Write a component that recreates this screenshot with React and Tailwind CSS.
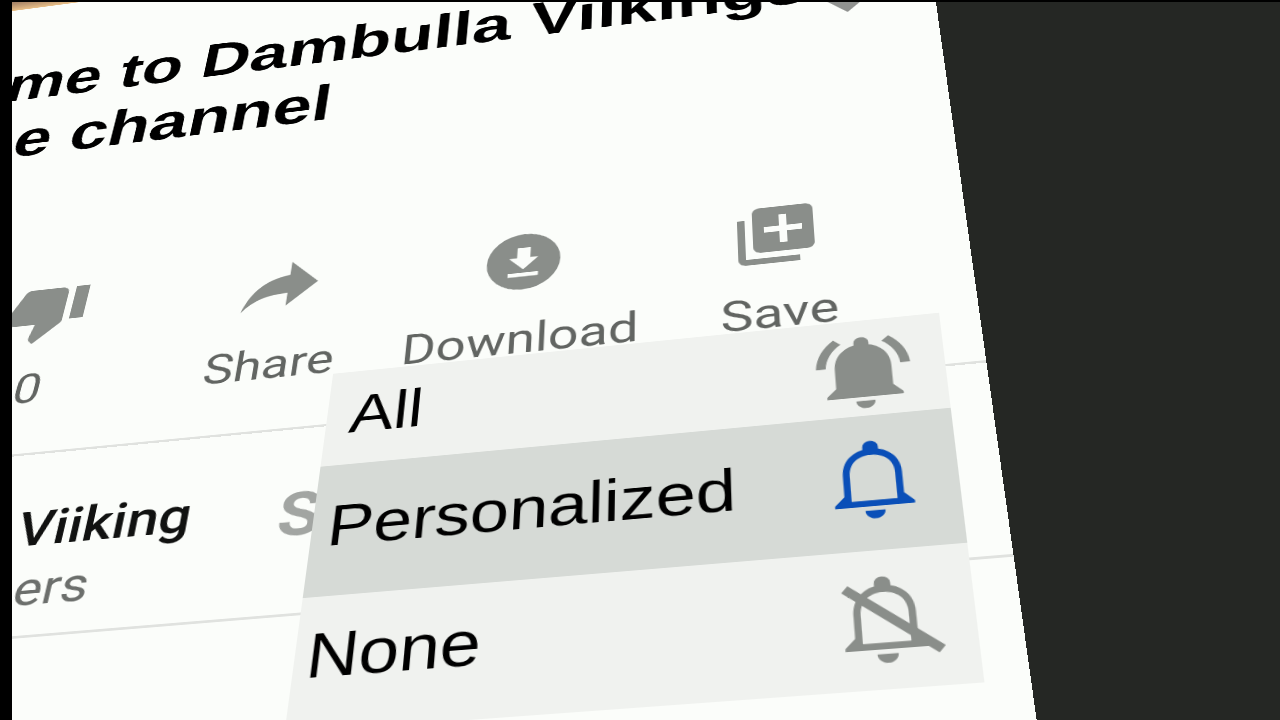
import React from "react";

const BELL =
  "M18 11c0-3.1-1.6-5.6-4.4-6.3V4.1a1.6 1.6 0 0 0-3.2 0v.6C7.6 5.4 6 7.9 6 11v5.2l-2 2.1v.7h16v-.7l-2-2.1z";
const BELL_HOLE = "M12 6.1c-3 0-4.6 2.2-4.6 4.9v6.5h9.2V11c0-2.7-1.6-4.9-4.6-4.9z";
const CLAPPER = "M10 20h4c0 1.2-.9 2-2 2s-2-.8-2-2z";

const DislikeIcon = () => (
  <svg viewBox="0 0 24 24" className="size-24 fill-current">
    <path d="M15 3H6c-.8 0-1.5.5-1.8 1.2l-3.1 7.1c-.1.2-.1.5-.1.7v2c0 1.1.9 2 2 2h6.3l-.9 4.6v.3c0 .4.1.8.4 1.1l1 1 6.6-6.6c.4-.4.6-.9.6-1.4V5c0-1.1-.9-2-2-2zm4 0v12h4V3h-4z" />
  </svg>
);

const ShareIcon = () => (
  <svg viewBox="1 2 22 22" className="size-24 fill-current">
    <path d="M14 9V4.6L21.5 12 14 19.2V15c-5.2 0-8.6 1.3-11.5 5.2C4 14.5 7 9.8 14 9z" />
  </svg>
);

const DownloadIcon = () => (
  <svg viewBox="0 0 24 24" className="size-24">
    <circle cx="12" cy="12" r="10" className="fill-current" />
    <path d="M10.2 7h3.6v3.6H16L12 14.8 8 10.6h2.2z" fill="#fbfdfa" />
    <path d="M7.9 16h8.2v1.4H7.9z" fill="#fbfdfa" />
  </svg>
);

const SaveIcon = () => (
  <svg viewBox="0 0 24 24" className="size-24 fill-current">
    <path d="M4 6H2v14c0 1.1.9 2 2 2h14v-2H4V6zm16-4H8c-1.1 0-2 .9-2 2v12c0 1.1.9 2 2 2h12c1.1 0 2-.9 2-2V4c0-1.1-.9-2-2-2zm-1 9h-4v4h-2v-4H9V9h4V5h2v4h4v2z" />
  </svg>
);

const BellRinging = () => (
  <svg viewBox="0 0 24 24" className="size-[110px] self-end fill-current text-[#8a8e8a]">
    <path d={BELL} />
    <path d={CLAPPER} />
    <path d="M7.6 4.1 6.1 2.7C3.8 4.5 2.2 7.3 2 10.5h2.1c.1-2.6 1.5-5 3.5-6.4zM19.9 10.5H22c-.2-3.2-1.8-6-4.1-7.8l-1.5 1.4c2 1.4 3.4 3.8 3.5 6.4z" />
  </svg>
);

const BellOutline = () => (
  <svg viewBox="0 0 24 24" className="size-[110px] fill-current text-[#0a4fb8]">
    <path fillRule="evenodd" d={`${BELL}${BELL_HOLE}`} />
    <path d={CLAPPER} />
  </svg>
);

const BellOff = () => (
  <svg viewBox="0 0 24 24" className="size-[110px] fill-current text-[#8a8e8a]">
    <path fillRule="evenodd" d={`${BELL}${BELL_HOLE}`} />
    <path d={CLAPPER} />
    <path d="M4.6 4.9 22.3 19.8" stroke="currentColor" strokeWidth="2" />
  </svg>
);

const actions = [
  { label: "0", Icon: DislikeIcon },
  { label: "Share", Icon: ShareIcon },
  { label: "Download", Icon: DownloadIcon },
  { label: "Save", Icon: SaveIcon },
];

const options = [
  { label: "All", Icon: BellRinging, row: "h-[120px] pl-6 bg-[#f0f2ef]", text: "pb-2" },
  { label: "Personalized", Icon: BellOutline, row: "h-[155px] pl-4 pb-2 bg-[#d6dad6]", text: "" },
  { label: "None", Icon: BellOff, row: "h-[144px] pl-3 bg-[#f0f2ef]", text: "pb-4" },
];

const NotificationMenu = () => (
  <div className="absolute top-[694px] right-[39px] w-[622px] font-['Liberation_Sans',sans-serif] text-[69px] leading-none text-black">
    {options.map(({ label, Icon, row, text }) => (
      <button key={label} className={`flex w-full items-center justify-between pr-6 ${row}`}>
        <span className={text}>{label}</span>
        <Icon />
      </button>
    ))}
  </div>
);

const App = () => {
  return (
    <div className="h-screen w-full overflow-hidden bg-black pt-0.5 pl-3">
      <div className="h-full overflow-hidden bg-[#252724]">
        {/* Phone page, lying on a tilted plane */}
        <main className="relative min-h-[1300px] w-[1185px] origin-top-left bg-[#fbfdfa] font-[Roboto,sans-serif] [transform:matrix3d(0.72176,-0.09616,0,-0.000058,-0.16075,0.5005,0,-0.00025,0,0,1,0,-11,-1,0,1)]">
          {/* Bottom edge of the video */}
          <div className="h-6 bg-linear-to-b from-[#8a6a58] to-[#e8bf88]" />

          <div className="flex items-start justify-between pt-24 pr-[72px] pl-12">
            <h1 className="font-['Liberation_Sans',sans-serif] text-[86px] leading-[102px] font-bold whitespace-nowrap text-black">
              <span className="block">me to Dambulla Viikings</span>
              <span className="block pl-8">e channel</span>
            </h1>
            <svg viewBox="0 0 56 108" className="h-[108px] w-14 shrink-0 fill-[#8f918f]">
              <path d="M0 80h56l-28 28z" />
            </svg>
          </div>

          <div className="mt-48 grid grid-cols-4 border-b-3 border-[#e0e2df] pr-[62px] pb-[60px] pl-12">
            {actions.map(({ label, Icon }) => (
              <button key={label} className="flex flex-col items-center gap-8 text-[#8a8e8a]">
                <Icon />
                <span className="text-[56px] leading-none text-[#626562]">{label}</span>
              </button>
            ))}
          </div>

          <div className="flex items-start border-b-3 border-[#e0e2df] pt-[60px] pb-[18px] pl-[213px]">
            <div className="w-[274px]">
              <p className="text-[60px] leading-[72px] font-medium text-[#111211]">Viiking</p>
              <p className="pl-3 text-[56px] leading-[72px] text-[#6c6f6c]">ers</p>
            </div>
            <button className="text-[72px] leading-24 font-bold text-[#a2a5a2]">S</button>
          </div>

          <NotificationMenu />
        </main>
      </div>
    </div>
  );
};

export default App;
